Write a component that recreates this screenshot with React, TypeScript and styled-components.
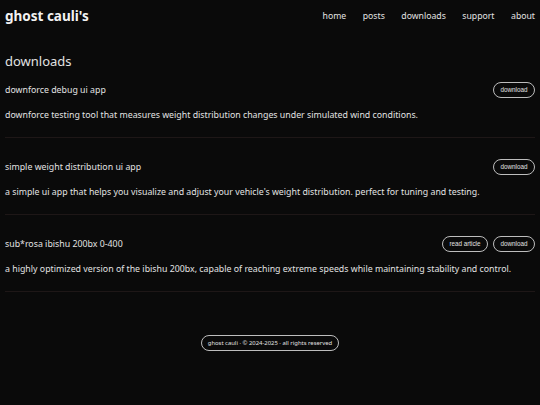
import styled, { createGlobalStyle } from "styled-components";

const GlobalStyle = createGlobalStyle`
    html, body {
        margin: 0;
        padding: 0;
        background: #0a0a0a;
        color: #e2e2e2;
        font-family: "Noto Sans", "Open Sans", sans-serif;
    }
    #root {
        min-height: 405px;
    }
`

const Page = styled.div`
    display: flex;
    flex-direction: column;
    padding: 0 5px;
`

const Header = styled.header`
    display: flex;
    align-items: center;
    justify-content: space-between;
    height: 32px;
`

const Brand = styled.a`
    font-size: 13.5px;
    font-weight: 700;
    color: #f2f2f2;
    text-decoration: none;
`

const Nav = styled.nav`
    display: flex;
    gap: 16.5px;
`

const NavLink = styled.a`
    font-size: 8.7px;
    color: #e2e2e2;
    text-decoration: none;
`

const Main = styled.main`
    display: flex;
    flex-direction: column;
    padding-top: 20px;
`

const Heading = styled.h2`
    margin: 0 0 11px;
    font-size: 13px;
    font-weight: 400;
    line-height: 18px;
`

const Item = styled.section`
    display: flex;
    flex-direction: column;
    gap: 11px;
    padding: 0 0 15px;
    border-bottom: 1px solid #1e1717;
    & + & {
        padding-top: 20px;
    }
`

const ItemHead = styled.div`
    display: flex;
    align-items: center;
    justify-content: space-between;
    height: 17px;
`

const ItemTitle = styled.h3`
    margin: 0;
    font-size: 8.8px;
    font-weight: 400;
`

const Actions = styled.div`
    display: flex;
    gap: 5px;
`

const Pill = styled.button`
    font-family: "Liberation Sans", Arial, sans-serif;
    font-size: 6.3px;
    color: #e2e2e2;
    background: transparent;
    border: 1px solid #bdbdbd;
    border-radius: 999px;
    height: 16px;
    padding: 0 6.5px;
    cursor: pointer;
`

const Desc = styled.p`
    margin: 0;
    font-size: 8.8px;
    line-height: 13px;
`

const Footer = styled.footer`
    display: flex;
    justify-content: center;
    padding-top: 43px;
`

const FooterPill = styled.span`
    display: inline-flex;
    align-items: center;
    font-size: 5.9px;
    height: 14px;
    border: 1px solid #bdbdbd;
    border-radius: 999px;
    padding: 0 6px;
`

const items = [
    {
        title: "downforce debug ui app",
        desc: "downforce testing tool that measures weight distribution changes under simulated wind conditions.",
        article: false,
    },
    {
        title: "simple weight distribution ui app",
        desc: "a simple ui app that helps you visualize and adjust your vehicle's weight distribution. perfect for tuning and testing.",
        article: false,
    },
    {
        title: "sub*rosa ibishu 200bx 0-400",
        desc: "a highly optimized version of the ibishu 200bx, capable of reaching extreme speeds while maintaining stability and control.",
        article: true,
    },
]

export default function App() {
    return <>
        <GlobalStyle />
        <Page>
            <Header>
                <Brand href="#">ghost cauli's</Brand>
                <Nav>
                    {["home", "posts", "downloads", "support", "about"].map(l =>
                        <NavLink key={l} href="#">{l}</NavLink>
                    )}
                </Nav>
            </Header>
            <Main>
                <Heading>downloads</Heading>
                {items.map(it =>
                    <Item key={it.title}>
                        <ItemHead>
                            <ItemTitle>{it.title}</ItemTitle>
                            <Actions>
                                {it.article && <Pill>read article</Pill>}
                                <Pill>download</Pill>
                            </Actions>
                        </ItemHead>
                        <Desc>{it.desc}</Desc>
                    </Item>
                )}
            </Main>
            <Footer>
                <FooterPill>ghost cauli · © 2024-2025 · all rights reserved</FooterPill>
            </Footer>
        </Page>
    </>
}
